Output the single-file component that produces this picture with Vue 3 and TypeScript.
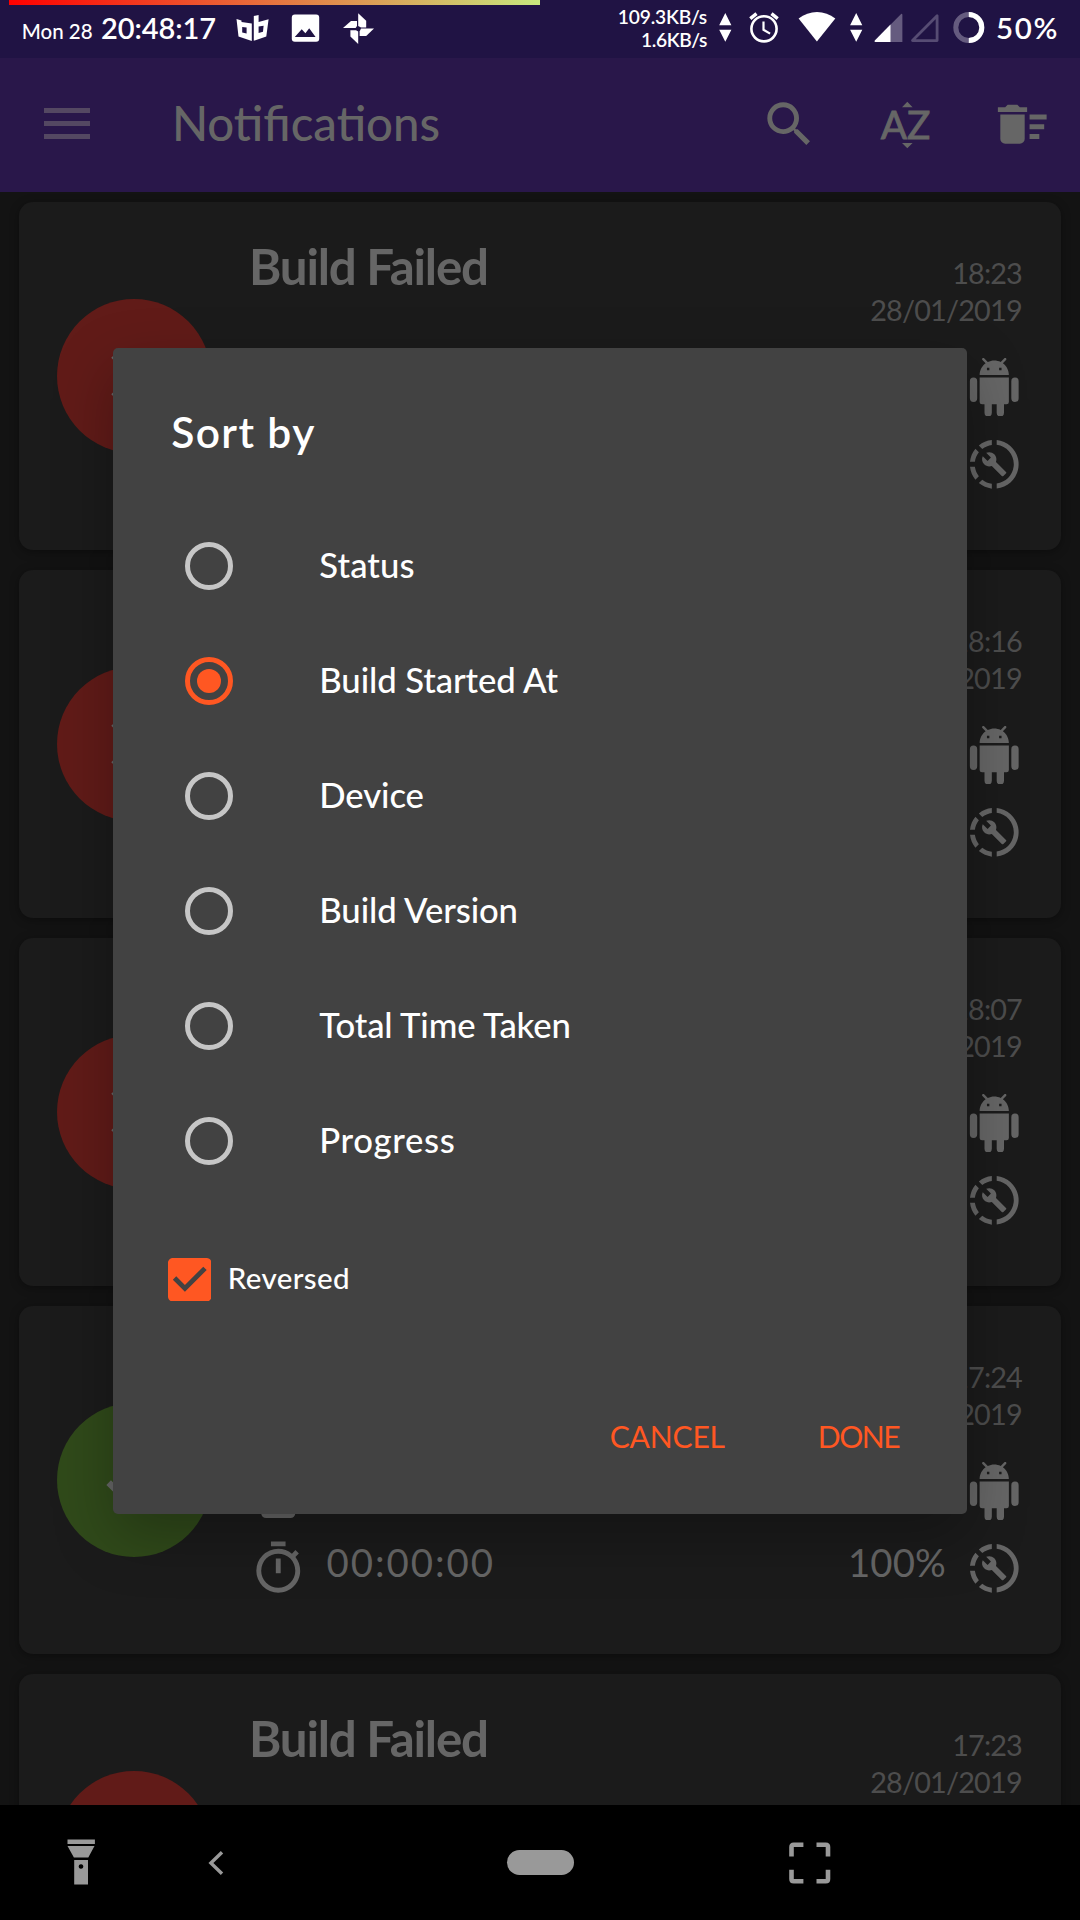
<script setup lang="ts">
import { ref } from 'vue'

interface Build {
  id: number
  title: string
  ok: boolean
  time: string
  date: string
  duration?: string
  progress?: string
}

interface SortOption {
  label: string
  tracking: number
}

const builds: Build[] = [
  { id: 1, title: 'Build Failed', ok: false, time: '18:23', date: '28/01/2019' },
  { id: 2, title: '', ok: false, time: '18:16', date: '28/01/2019' },
  { id: 3, title: '', ok: false, time: '18:07', date: '28/01/2019' },
  { id: 4, title: '', ok: true, time: '17:24', date: '28/01/2019', duration: '00:00:00', progress: '100%' },
  { id: 5, title: 'Build Failed', ok: false, time: '17:23', date: '28/01/2019' },
]

const options: SortOption[] = [
  { label: 'Status', tracking: 0.1 },
  { label: 'Build Started At', tracking: -0.1 },
  { label: 'Device', tracking: -0.1 },
  { label: 'Build Version', tracking: -0.1 },
  { label: 'Total Time Taken', tracking: -0.15 },
  { label: 'Progress', tracking: 0.65 },
]

const selected = ref('Build Started At')
const reversed = ref(true)
</script>

<template>
  <div class="screen">
    <div class="charge"></div>
    <header class="status">
      <span class="day">Mon 28</span>
      <span class="clock">20:48:17</span>
      <svg width="33" height="58" viewBox="236 0 33 58" fill="#fff" fill-rule="evenodd">
        <path d="M236.5 19L241.5 20.6V22L251.8 23.6V41L238.5 36.6ZM242.2 27V32.4L246.6 33.6V27.6Z" />
        <path d="M253.8 16L258.6 15V22L268.6 19.2L266.3 36.6L253.8 40.8ZM258.6 26.6V33L263 31.8L263.6 25.8Z" />
      </svg>
      <svg class="s-photo" width="29" height="58" viewBox="291 0 29 58">
        <rect x="291.8" y="14.6" width="27.4" height="27.2" rx="3" fill="#fff" />
        <path d="M294.8 37L301.7 29.2L305.4 33.2L309.2 28.2L315.6 37Z" fill="#201344" />
      </svg>
      <svg width="32" height="58" viewBox="343 0 32 58" fill="#fff">
        <path d="M358.2 13.2L366.2 20.8V27.5H361L358.2 26Z" />
        <path d="M374 28.6L366.2 36H359.6V31.4L361 28.6Z" />
        <path d="M358.2 44L350.4 36.6V30.3H356L358.2 31.5Z" />
        <path d="M343 28L351 21H357V26L355.6 28Z" />
      </svg>
      <div class="speed"><span>109.3KB/s</span><span class="slow">1.6KB/s</span></div>
      <svg class="s-arrows" width="13" height="58" viewBox="719 0 13 58" fill="#fff">
        <path d="M725.3 13L731.4 25.3H719.2ZM719.2 29.8H731.4L725.3 41.8Z" />
      </svg>
      <svg class="s-alarm" width="30" height="58" viewBox="748.5 0 30 58" fill="none" stroke="#fff">
        <circle cx="763.5" cy="28.8" r="12.6" stroke-width="2.6" />
        <path d="M763 21.5V29.8L769.6 33.6" stroke-width="2.2" />
        <path d="M749.8 18.6L756 13.6M777.2 18.6L771 13.6" stroke-width="3.4" />
      </svg>
      <svg class="s-wifi" width="38" height="58" viewBox="797.7 0 38 58" fill="#fff">
        <path d="M798.3 18.6C809 9.8 824.5 9.8 835 18.6L816.6 41.4Z" />
      </svg>
      <svg class="s-arrows2" width="13" height="58" viewBox="850 0 13 58" fill="#fff">
        <path d="M856.2 13L862.3 25.3H850.1ZM850.1 29.8H862.3L856.2 41.8Z" />
      </svg>
      <svg class="s-sig" width="29" height="58" viewBox="873.5 0 29 58">
        <path d="M900.6 13.9Q901.9 13.4 901.9 15V42H875Q873.4 41.5 874.6 40.2Z" fill="#655b7f" />
        <path d="M890 24.6V42H875Q873.4 41.5 874.6 40.2Z" fill="#fff" />
      </svg>
      <svg class="s-sig2" width="29" height="58" viewBox="909.5 0 29 58">
        <path d="M936.6 15.8V40.6H912Z" fill="none" stroke="#564c73" stroke-width="2.8" stroke-linejoin="round" />
      </svg>
      <svg class="s-batt" width="32" height="58" viewBox="952.5 0 32 58" fill="none" stroke-width="5">
        <circle cx="968.3" cy="27.5" r="13" stroke="#655b7f" />
        <path d="M968.3 14.5A13 13 0 0 1 968.3 40.5" stroke="#fff" />
      </svg>
      <span class="percent">50%</span>
    </header>

    <div class="appbar">
      <div class="burger"><i></i><i></i><i></i></div>
      <h1>Notifications</h1>
      <svg class="a-search" width="58.5" height="58.5" viewBox="0 0 24 24" fill="#666">
        <path d="M9.5,3A6.5,6.5 0 0,1 16,9.5C16,11.11 15.41,12.59 14.44,13.73L14.71,14H15.5L20.5,19L19,20.5L14,15.5V14.71L13.73,14.44C12.59,15.41 11.11,16 9.5,16A6.5,6.5 0 0,1 3,9.5A6.5,6.5 0 0,1 9.5,3M9.5,5C7,5 5,7 5,9.5C5,12 7,14 9.5,14C12,14 14,12 14,9.5C14,7 12,5 9.5,5Z" />
      </svg>
      <svg class="a-sort" width="52" height="50" viewBox="880 99 52 50" fill="#666">
        <path d="M907.3 100.8L912.6 106.2H902ZM902 142H912.6L907.3 147.3Z" />
        <text x="880.8" y="137.5" font-size="38.5" textLength="49.6" lengthAdjust="spacingAndGlyphs" stroke="#666" stroke-width="0.9">AZ</text>
      </svg>
      <svg class="a-sweep" width="58.5" height="58.5" viewBox="0 0 24 24" fill="#666">
        <path d="M15,16H19V18H15V16M15,8H22V10H15V8M15,12H21V14H15V12M3,18A2,2 0 0,0 5,20H11A2,2 0 0,0 13,18V8H3V18M14,5H11L10,4H6L5,5H2V7H14V5Z" />
      </svg>
    </div>

    <main class="list">
      <article v-for="b in builds" :key="b.id" class="card">
        <div class="badge" :class="{ ok: b.ok }">
          <svg width="78" height="78" viewBox="0 0 24 24" fill="#666">
            <path v-if="b.ok" d="M21,7L9,19L3.5,13.5L4.91,12.09L9,16.17L19.59,5.59L21,7Z" />
            <path v-else d="M19,6.41L17.59,5L12,10.59L6.41,5L5,6.41L10.59,12L5,17.59L6.41,19L12,13.41L17.59,19L19,17.59L13.41,12L19,6.41Z" />
          </svg>
        </div>
        <div class="body">
          <div class="head">
            <h2>{{ b.title }}</h2>
            <div class="stamp"><span>{{ b.time }}</span><span class="date">{{ b.date }}</span></div>
          </div>
          <div class="row">
            <svg v-if="b.duration" class="icon" viewBox="0 0 24 24">
              <path d="M17,19H7V5H17M17,1H7C5.89,1 5,1.89 5,3V21A2,2 0 0,0 7,23H17A2,2 0 0,0 19,21V3C19,1.89 18.1,1 17,1Z" />
            </svg>
            <svg class="icon end" viewBox="0 0 24 24">
              <path d="M15,5H14V4H15M10,5H9V4H10M15.53,2.16L16.84,0.85C17.03,0.66 17.03,0.34 16.84,0.14C16.64,-0.05 16.32,-0.05 16.13,0.14L14.65,1.62C13.85,1.23 12.95,1 12,1C11.04,1 10.14,1.23 9.34,1.63L7.85,0.14C7.66,-0.05 7.34,-0.05 7.15,0.14C6.95,0.34 6.95,0.66 7.15,0.85L8.46,2.16C6.97,3.26 6,5 6,7H18C18,5 17,3.25 15.53,2.16M20.5,8A1.5,1.5 0 0,0 19,9.5V16.5A1.5,1.5 0 0,0 20.5,18A1.5,1.5 0 0,0 22,16.5V9.5A1.5,1.5 0 0,0 20.5,8M3.5,8A1.5,1.5 0 0,0 2,9.5V16.5A1.5,1.5 0 0,0 3.5,18A1.5,1.5 0 0,0 5,16.5V9.5A1.5,1.5 0 0,0 3.5,8M6,18A1,1 0 0,0 7,19H8V22.5A1.5,1.5 0 0,0 9.5,24A1.5,1.5 0 0,0 11,22.5V19H13V22.5A1.5,1.5 0 0,0 14.5,24A1.5,1.5 0 0,0 16,22.5V19H17A1,1 0 0,0 18,18V8H6V18Z" />
            </svg>
          </div>
          <div class="row">
            <svg v-if="b.duration" class="icon" viewBox="0 0 24 24">
              <path d="M12,20A7,7 0 0,1 5,13A7,7 0 0,1 12,6A7,7 0 0,1 19,13A7,7 0 0,1 12,20M19.03,7.39L20.45,5.97C20,5.46 19.55,5 19.04,4.56L17.62,6C16.07,4.74 14.12,4 12,4A9,9 0 0,0 3,13A9,9 0 0,0 12,22C17,22 21,17.97 21,13C21,10.88 20.26,8.93 19.03,7.39M11,14H13V8H11M15,1H9V3H15V1Z" />
            </svg>
            <span v-if="b.duration" class="duration">{{ b.duration }}</span>
            <span v-if="b.progress" class="progress">{{ b.progress }}</span>
            <svg class="icon end" viewBox="0 0 24 24">
              <path d="M13,2.03V2.05L13,4.05C17.39,4.59 20.5,8.58 19.96,12.97C19.5,16.61 16.64,19.5 13,19.93V21.93C18.5,21.38 22.5,16.5 21.95,11C21.5,6.25 17.73,2.5 13,2.03M11,2.06C9.05,2.25 7.19,3 5.67,4.26L7.1,5.74C8.22,4.84 9.57,4.26 11,4.06V2.06M4.26,5.67C3,7.19 2.25,9.04 2.05,11H4.05C4.24,9.58 4.8,8.23 5.69,7.1L4.26,5.67M2.06,13C2.26,14.96 3.03,16.81 4.27,18.33L5.69,16.9C4.81,15.77 4.24,14.42 4.06,13H2.06M7.1,18.37L5.67,19.74C7.18,21 9.04,21.79 11,22V20C9.58,19.82 8.23,19.25 7.1,18.37Z" />
              <path transform="translate(6.56 6.56) scale(0.452)" d="M22.7,19L13.6,9.9C14.5,7.6 14,4.9 12.1,3C10.1,1 7.1,0.6 4.7,1.7L9,6L6,9L1.6,4.7C0.4,7.1 0.9,10.1 2.9,12.1C4.8,14 7.5,14.5 9.8,13.6L18.9,22.7C19.3,23.1 19.9,23.1 20.3,22.7L22.6,20.4C23.1,20 23.1,19.3 22.7,19Z" />
            </svg>
          </div>
        </div>
      </article>
    </main>

    <nav class="nav">
      <svg width="28" height="47" viewBox="67 1840 28 47" fill="#999">
        <path fill-rule="evenodd" d="M67.5 1840.5H94.9V1845H67.5ZM67.5 1847H94.5L88.3 1858.5H73.9ZM74.2 1861H88V1885.6H74.2ZM81 1865.2a2.3 2.3 0 1 0 .01 0Z" />
      </svg>
      <svg class="n-back" width="16" height="26" viewBox="208 1849.5 16 26" fill="none" stroke="#999" stroke-width="3.4">
        <path d="M222 1851.7L210.9 1862.5L222 1873.3" />
      </svg>
      <div class="pill"></div>
      <svg class="n-frame" width="42" height="42" viewBox="789.5 1842 42 42" fill="none" stroke="#999" stroke-width="4.6">
        <path d="M792 1856.5V1847Q792 1844.8 794.2 1844.8H803.9M817 1844.8H826.3Q828.5 1844.8 828.5 1847V1856.5M828.5 1869.8V1879Q828.5 1881.2 826.3 1881.2H817M803.9 1881.2H794.2Q792 1881.2 792 1879V1869.8" />
      </svg>
    </nav>

    <section class="dialog">
      <h3>Sort by</h3>
      <ul class="options">
        <li v-for="o in options" :key="o.label" @click="selected = o.label">
          <span class="radio" :class="{ on: selected === o.label }"></span>
          <span class="label" :style="{ letterSpacing: o.tracking + 'px' }">{{ o.label }}</span>
        </li>
      </ul>
      <div class="reverse" @click="reversed = !reversed">
        <svg width="43.5" height="43.5" viewBox="3 3 18 18">
          <path v-if="reversed" fill="#ff5722" d="M19,3H5C3.89,3 3,3.9 3,5V19C3,20.1 3.89,21 5,21H19C20.11,21 21,20.1 21,19V5C21,3.9 20.11,3 19,3M10,17L5,12L6.41,10.59L10,14.17L17.59,6.58L19,8L10,17Z" />
          <path v-else fill="#c6c6c6" d="M19,3H5C3.89,3 3,3.9 3,5V19C3,20.1 3.89,21 5,21H19C20.11,21 21,20.1 21,19V5C21,3.9 20.11,3 19,3M19,5V19H5V5H19Z" />
        </svg>
        <span>Reversed</span>
      </div>
      <div class="actions"><button class="cancel">CANCEL</button><button class="done">DONE</button></div>
    </section>
  </div>
</template>

<style>
body { margin: 0; background: #000; }
</style>

<style scoped>
* { box-sizing: border-box; }
.screen {
  position: relative;
  width: 1080px;
  height: 1920px;
  overflow: hidden;
  display: flex;
  flex-direction: column;
  background: #131313;
  font-family: Lato, "Open Sans", sans-serif;
  color: #fff;
}
svg { display: block; flex: none; }
svg text { font-family: Lato, sans-serif; }
span { white-space: nowrap; }
h1, h2, h3, ul { margin: 0; padding: 0; font-weight: 500; list-style: none; }

.charge {
  position: absolute;
  left: 9px;
  top: 0;
  width: 531px;
  height: 5px;
  background: linear-gradient(90deg, #f00, #e6743f 50%, #c8e87e);
}
.status {
  flex: none;
  display: flex;
  height: 58px;
  padding-left: 21.7px;
  background: #201344;
}
.day { width: 79.4px; font-size: 20.5px; line-height: 62px; font-weight: 500; }
.clock { width: 134.9px; font-size: 29px; line-height: 56px; font-weight: 600; letter-spacing: -0.1px; }
.s-photo { margin: 0 23px 0 22px; }
.speed {
  margin-left: auto;
  display: flex;
  flex-direction: column;
  align-items: flex-end;
  padding-top: 4.5px;
  font-size: 19.2px;
  line-height: 23px;
  font-weight: 600;
  letter-spacing: -0.2px;
}
.speed .slow { letter-spacing: -0.4px; }
.s-arrows { margin-left: 12px; }
.s-alarm { margin-left: 16.5px; }
.s-wifi { margin-left: 19.2px; }
.s-arrows2 { margin-left: 14.3px; }
.s-sig { margin-left: 10.5px; }
.s-sig2 { margin-left: 7px; }
.s-batt { margin-left: 14px; }
.percent { width: 84px; margin-left: 11.5px; font-size: 29.5px; line-height: 55px; font-weight: 600; letter-spacing: 1.7px; }

.appbar {
  flex: none;
  display: flex;
  align-items: center;
  height: 134px;
  padding: 0 29px 1px 44.4px;
  background: #29174a;
}
.burger { display: flex; flex-direction: column; gap: 7.7px; width: 45.5px; padding-bottom: 2px; }
.burger i { height: 5px; background: #544862; }
h1 { margin-left: 82px; padding-bottom: 3px; font-size: 47.3px; line-height: 60px; letter-spacing: 0; color: #666; }
.a-search { margin-left: auto; }
.a-sort { margin-left: 61px; }
.a-sweep { margin-left: 61px; }

.list {
  flex: 1;
  min-height: 0;
  overflow: hidden;
  display: flex;
  flex-direction: column;
  gap: 20px;
  padding: 10px 19px 0;
}
.card {
  flex: none;
  display: flex;
  height: 348px;
  padding: 0 37.6px 0 38px;
  border-radius: 14px;
  background: #1b1b1b;
  box-shadow: 0 2px 10px rgba(0, 0, 0, 0.35);
}
.badge {
  flex: none;
  display: flex;
  align-items: center;
  justify-content: center;
  width: 154px;
  height: 154px;
  margin-top: 97px;
  border-radius: 50%;
  background: #611b18;
}
.badge.ok { background: #304a1a; }
.body { flex: 1; display: flex; flex-direction: column; margin-left: 38px; }
.head { flex: none; display: flex; justify-content: space-between; height: 155.7px; }
h2 { margin-top: 34px; font-size: 49.3px; line-height: 60px; font-weight: 700; letter-spacing: -1.2px; color: #666; }
.stamp {
  display: flex;
  flex-direction: column;
  align-items: flex-end;
  margin: 53.4px 1.6px 0 0;
  font-size: 28.8px;
  line-height: 37px;
  color: #4d4d4d;
}
.stamp span { letter-spacing: -0.9px; }
.stamp .date { letter-spacing: -0.8px; }
.row { flex: none; display: flex; align-items: center; height: 58.5px; margin-bottom: 18.5px; color: #666; }
.icon { width: 58.5px; height: 58.5px; fill: #666; }
.end { margin-left: auto; }
.duration { margin-left: 19px; padding-bottom: 12.5px; font-size: 38.4px; letter-spacing: 1.95px; }
.progress { margin-left: auto; margin-right: 19px; padding-bottom: 12.5px; font-size: 38.4px; letter-spacing: 0.1px; }
.progress + .end { margin-left: 0; }

.nav { flex: none; display: flex; align-items: center; height: 115px; padding-left: 67px; background: #000; }
.n-back { margin-left: 113px; }
.pill { width: 67px; height: 25px; margin-left: 282.5px; border-radius: 13px; background: #999; }
.n-frame { margin-left: 215.5px; }

.dialog {
  position: absolute;
  left: 113px;
  top: 348px;
  width: 854px;
  height: 1166px;
  display: flex;
  flex-direction: column;
  border-radius: 5px;
  background: #424242;
  box-shadow: 0 22px 60px rgba(0, 0, 0, 0.28);
}
h3 { margin: 59.4px 0 51px 58.2px; font-size: 42.5px; line-height: 50px; font-weight: 600; letter-spacing: 1.4px; }
.options li { display: flex; align-items: center; height: 115px; padding-left: 72px; }
.radio { position: relative; width: 48.4px; height: 48.4px; border: 5px solid #c6c6c6; border-radius: 50%; }
.radio.on { border-color: #ff5722; }
.radio.on::after { content: ""; position: absolute; inset: 7px; border-radius: 50%; background: #ff5722; }
.label { margin-left: 85.9px; padding-bottom: 2px; font-size: 34.7px; font-weight: 500; }
.reverse { display: flex; align-items: center; margin: 59.6px 0 0 54.7px; }
.reverse span { margin-left: 16.5px; padding-bottom: 2.5px; font-size: 29.5px; line-height: 36px; font-weight: 500; letter-spacing: 0.4px; }
.actions { display: flex; justify-content: flex-end; margin: auto 67.8px 58px 0; gap: 93px; }
button { padding: 0; border: 0; background: none; color: #ff5722; font: 400 30.1px/40px Lato, sans-serif; }
.cancel { letter-spacing: -0.2px; }
.done { letter-spacing: -1.5px; }
</style>
